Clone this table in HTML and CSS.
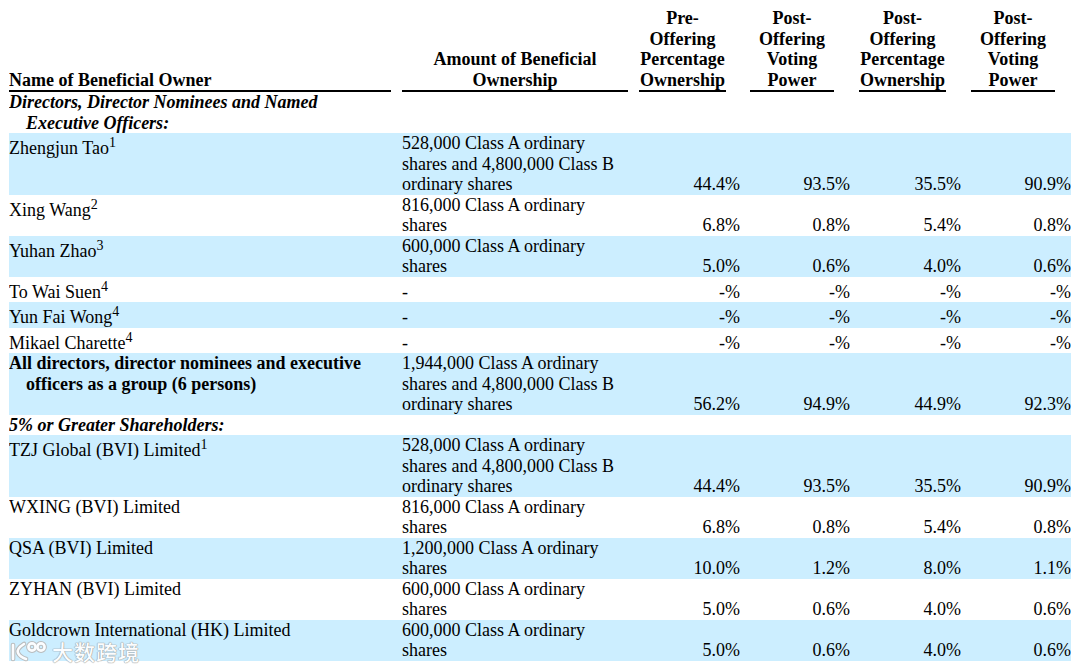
FILE: index.html
```html
<!DOCTYPE html>
<html lang="en">
<head>
<meta charset="utf-8">
<title>Beneficial Ownership</title>
<link rel="stylesheet" href="styles.css">
</head>
<body>
<table class="own">
  <colgroup>
    <col class="c-name"><col class="c-amt"><col class="c-pre"><col class="c-pv"><col class="c-pp"><col class="c-pv2">
  </colgroup>
  <thead>
    <tr>
      <th class="name"><div class="hd">Name of Beneficial Owner</div></th>
      <th class="amt"><div class="hd">Amount of Beneficial Ownership</div></th>
      <th class="pre"><div class="hd">Pre-Offering Percentage Ownership</div></th>
      <th class="pv"><div class="hd">Post-Offering Voting Power</div></th>
      <th class="pp"><div class="hd">Post-Offering Percentage Ownership</div></th>
      <th class="pv2"><div class="hd">Post-Offering Voting Power</div></th>
    </tr>
  </thead>
  <tbody>
    <tr class="section">
      <td class="name hang">Directors, Director Nominees and Named Executive Officers:</td>
      <td class="amt"></td><td class="pre"></td><td class="pv"></td><td class="pp"></td><td class="pv2"></td>
    </tr>
    <tr class="band">
      <td class="name">Zhengjun Tao<sup>1</sup></td>
      <td class="amt">528,000 Class A ordinary shares and 4,800,000 Class B ordinary shares</td>
      <td class="pre pct">44.4%</td><td class="pv pct">93.5%</td><td class="pp pct">35.5%</td><td class="pv2 pct">90.9%</td>
    </tr>
    <tr>
      <td class="name">Xing Wang<sup>2</sup></td>
      <td class="amt">816,000 Class A ordinary shares</td>
      <td class="pre pct">6.8%</td><td class="pv pct">0.8%</td><td class="pp pct">5.4%</td><td class="pv2 pct">0.8%</td>
    </tr>
    <tr class="band">
      <td class="name">Yuhan Zhao<sup>3</sup></td>
      <td class="amt">600,000 Class A ordinary shares</td>
      <td class="pre pct">5.0%</td><td class="pv pct">0.6%</td><td class="pp pct">4.0%</td><td class="pv2 pct">0.6%</td>
    </tr>
    <tr>
      <td class="name">To Wai Suen<sup>4</sup></td>
      <td class="amt">-</td>
      <td class="pre pct">-%</td><td class="pv pct">-%</td><td class="pp pct">-%</td><td class="pv2 pct">-%</td>
    </tr>
    <tr class="band">
      <td class="name">Yun Fai Wong<sup>4</sup></td>
      <td class="amt">-</td>
      <td class="pre pct">-%</td><td class="pv pct">-%</td><td class="pp pct">-%</td><td class="pv2 pct">-%</td>
    </tr>
    <tr>
      <td class="name">Mikael Charette<sup>4</sup></td>
      <td class="amt">-</td>
      <td class="pre pct">-%</td><td class="pv pct">-%</td><td class="pp pct">-%</td><td class="pv2 pct">-%</td>
    </tr>
    <tr class="band total">
      <td class="name hang">All directors, director nominees and executive officers as a group (6 persons)</td>
      <td class="amt">1,944,000 Class A ordinary shares and 4,800,000 Class B ordinary shares</td>
      <td class="pre pct">56.2%</td><td class="pv pct">94.9%</td><td class="pp pct">44.9%</td><td class="pv2 pct">92.3%</td>
    </tr>
    <tr class="section">
      <td class="name hang">5% or Greater Shareholders:</td>
      <td class="amt"></td><td class="pre"></td><td class="pv"></td><td class="pp"></td><td class="pv2"></td>
    </tr>
    <tr class="band">
      <td class="name">TZJ Global (BVI) Limited<sup>1</sup></td>
      <td class="amt">528,000 Class A ordinary shares and 4,800,000 Class B ordinary shares</td>
      <td class="pre pct">44.4%</td><td class="pv pct">93.5%</td><td class="pp pct">35.5%</td><td class="pv2 pct">90.9%</td>
    </tr>
    <tr>
      <td class="name">WXING (BVI) Limited</td>
      <td class="amt">816,000 Class A ordinary shares</td>
      <td class="pre pct">6.8%</td><td class="pv pct">0.8%</td><td class="pp pct">5.4%</td><td class="pv2 pct">0.8%</td>
    </tr>
    <tr class="band">
      <td class="name">QSA (BVI) Limited</td>
      <td class="amt">1,200,000 Class A ordinary shares</td>
      <td class="pre pct">10.0%</td><td class="pv pct">1.2%</td><td class="pp pct">8.0%</td><td class="pv2 pct">1.1%</td>
    </tr>
    <tr>
      <td class="name">ZYHAN (BVI) Limited</td>
      <td class="amt">600,000 Class A ordinary shares</td>
      <td class="pre pct">5.0%</td><td class="pv pct">0.6%</td><td class="pp pct">4.0%</td><td class="pv2 pct">0.6%</td>
    </tr>
    <tr class="band">
      <td class="name">Goldcrown International (HK) Limited</td>
      <td class="amt">600,000 Class A ordinary shares</td>
      <td class="pre pct">5.0%</td><td class="pv pct">0.6%</td><td class="pp pct">4.0%</td><td class="pv2 pct">0.6%</td>
    </tr>
  </tbody>
</table>

<div class="wm">
  <svg class="wm-logo" width="40" height="22" viewBox="0 0 40 22">
    <g fill="none" stroke-linecap="round" stroke-linejoin="round">
      <g stroke="#b8b8b8" stroke-width="4.6">
        <path d="M4 5 V19"/>
        <path d="M15 4 Q7 9 9 13 Q11 17 17 19"/>
        <circle cx="23" cy="7" r="3.6"/>
        <circle cx="32" cy="7" r="3.6"/>
      </g>
      <g stroke="#ffffff" stroke-width="2.6">
        <path d="M4 5 V19"/>
        <path d="M15 4 Q7 9 9 13 Q11 17 17 19"/>
        <circle cx="23" cy="7" r="3.6"/>
        <circle cx="32" cy="7" r="3.6"/>
      </g>
    </g>
  </svg>
  <span class="wm-text">大数跨境</span>
</div>
</body>
</html>
```

FILE: styles.css
```css
body {
  margin: 8px 9px;
  font-family: "Liberation Serif", "Times New Roman", serif;
  font-size: 18px;
  line-height: 20.5px;
  color: #000;
  background: #fff;
}

.own {
  border-collapse: collapse;
  border-spacing: 0;
  table-layout: fixed;
  width: 1062px;
}

.c-name { width: 382px; }
.c-amt { width: 237px; }
.c-pre { width: 112px; }
.c-pv { width: 110px; }
.c-pp { width: 111px; }
.c-pv2 { width: 110px; }

th,
td {
  padding: 0;
}

th {
  font-weight: bold;
  vertical-align: bottom;
  text-align: center;
}

th.name {
  text-align: left;
}

.hd {
  border-bottom: 2px solid #000;
}

.amt { padding-left: 11px; }
.pre { padding-left: 11px; }
.pv { padding-left: 10px; }
.pp { padding-left: 9px; }
.pv2 { padding-left: 10px; }

.pre .hd { margin-right: 14px; }
.pv .hd { margin-right: 16px; }
.pp .hd { margin-right: 15px; }
.pv2 .hd { margin-right: 16px; }

td.name {
  vertical-align: top;
  text-align: left;
}

td.amt {
  vertical-align: bottom;
  text-align: left;
}

td.pct {
  vertical-align: bottom;
  text-align: right;
}

tr.band {
  background: #cceeff;
}

.section .name {
  font-weight: bold;
  font-style: italic;
}

.total .name {
  font-weight: bold;
}

.hang {
  padding-left: 17px;
  text-indent: -17px;
}

sup {
  font-size: 14px;
  vertical-align: super;
}

.wm {
  position: absolute;
  left: 9px;
  top: 639px;
  display: flex;
  align-items: center;
  gap: 3px;
  opacity: 0.92;
}

.wm-logo {
  display: block;
}

.wm-text {
  font-family: "Noto Sans CJK SC", sans-serif;
  font-size: 21px;
  line-height: 24px;
  font-weight: 500;
  letter-spacing: 1px;
  color: #fff;
  text-shadow: 0 0 1px #999, 0 0 1px #999, 0 0 1px #999;
}
```
